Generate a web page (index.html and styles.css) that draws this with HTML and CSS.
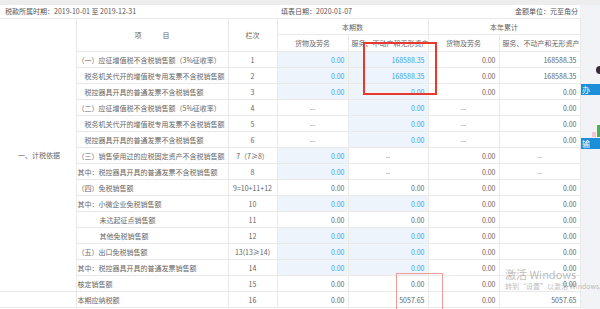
FILE: index.html
```html
<!DOCTYPE html>
<html lang="zh">
<head>
<meta charset="utf-8">
<link rel="stylesheet" href="styles.css">
</head>
<body>
<div class="topstrip"></div>
<div class="page">
  <div class="main">
    <div class="meta">
      <span>税款所属时期：2019-10-01 至 2019-12-31</span>
      <span class="meta-date">填表日期：2020-01-07</span>
      <span class="meta-unit">金额单位：元至角分</span>
    </div>
    <table class="grid">
      <colgroup>
        <col class="c0"><col class="c1"><col class="c2"><col class="c3"><col class="c4"><col class="c5"><col class="c6">
      </colgroup>
      <tr class="h1">
        <td class="sec" rowspan="17">一、计税依据</td>
        <td class="ctr" rowspan="2">项　　　目</td>
        <td class="ctr" rowspan="2">栏次</td>
        <td class="ctr" colspan="2">本期数</td>
        <td class="ctr" colspan="2">本年累计</td>
      </tr>
      <tr class="h2">
        <td class="ctr">货物及劳务</td>
        <td class="ctr">服务、不动产和无形资产</td>
        <td class="ctr">货物及劳务</td>
        <td class="ctr">服务、不动产和无形资产</td>
      </tr>
      <tr><td class="lbl">（一）应征增值税不含税销售额（3%征收率）</td><td class="ctr">1</td><td class="num ed">0.00</td><td class="num ed">168588.35</td><td class="num">0.00</td><td class="num">168588.35</td></tr>
      <tr><td class="lbl ind">税务机关代开的增值税专用发票不含税销售额</td><td class="ctr">2</td><td class="num ed">0.00</td><td class="num ed">168588.35</td><td class="num">0.00</td><td class="num">168588.35</td></tr>
      <tr><td class="lbl ind">税控器具开具的普通发票不含税销售额</td><td class="ctr">3</td><td class="num ed">0.00</td><td class="num ed">0.00</td><td class="num">0.00</td><td class="num">0.00</td></tr>
      <tr><td class="lbl">（二）应征增值税不含税销售额（5%征收率）</td><td class="ctr">4</td><td class="ctr dash">--</td><td class="num ed">0.00</td><td class="ctr dash">--</td><td class="num">0.00</td></tr>
      <tr><td class="lbl ind">税务机关代开的增值税专用发票不含税销售额</td><td class="ctr">5</td><td class="ctr dash">--</td><td class="num ed">0.00</td><td class="ctr dash">--</td><td class="num">0.00</td></tr>
      <tr><td class="lbl ind">税控器具开具的普通发票不含税销售额</td><td class="ctr">6</td><td class="ctr dash">--</td><td class="num ed">0.00</td><td class="ctr dash">--</td><td class="num">0.00</td></tr>
      <tr><td class="lbl">（三）销售使用过的应税固定资产不含税销售额</td><td class="ctr">7（7≥8）</td><td class="num ed">0.00</td><td class="ctr dash">--</td><td class="num">0.00</td><td class="ctr dash">--</td></tr>
      <tr><td class="lbl">其中：税控器具开具的普通发票不含税销售额</td><td class="ctr">8</td><td class="num ed">0.00</td><td class="ctr dash">--</td><td class="num">0.00</td><td class="ctr dash">--</td></tr>
      <tr><td class="lbl">（四）免税销售额</td><td class="ctr">9=10+11+12</td><td class="num">0.00</td><td class="num">0.00</td><td class="num">0.00</td><td class="num">0.00</td></tr>
      <tr><td class="lbl">其中：小微企业免税销售额</td><td class="ctr">10</td><td class="num ed">0.00</td><td class="num ed">0.00</td><td class="num">0.00</td><td class="num">0.00</td></tr>
      <tr><td class="lbl ind2">未达起征点销售额</td><td class="ctr">11</td><td class="num">0.00</td><td class="num">0.00</td><td class="num">0.00</td><td class="num">0.00</td></tr>
      <tr><td class="lbl ind2">其他免税销售额</td><td class="ctr">12</td><td class="num ed">0.00</td><td class="num ed">0.00</td><td class="num">0.00</td><td class="num">0.00</td></tr>
      <tr><td class="lbl">（五）出口免税销售额</td><td class="ctr">13(13≥14)</td><td class="num ed">0.00</td><td class="num ed">0.00</td><td class="num">0.00</td><td class="num">0.00</td></tr>
      <tr><td class="lbl">其中：税控器具开具的普通发票销售额</td><td class="ctr">14</td><td class="num ed">0.00</td><td class="num ed">0.00</td><td class="num">0.00</td><td class="num">0.00</td></tr>
      <tr><td class="lbl">核定销售额</td><td class="ctr">15</td><td class="num">0.00</td><td class="num">0.00</td><td class="num">0.00</td><td class="num">0.00</td></tr>
      <tr><td class="sec"></td><td class="lbl">本期应纳税额</td><td class="ctr">16</td><td class="num">0.00</td><td class="num">5057.65</td><td class="num">0.00</td><td class="num">5057.65</td></tr>
    </table>
    <div class="mark mark-a"></div>
    <div class="mark mark-b"></div>
    <div class="watermark">
      <div class="wm-big">激活 Windows</div>
      <div class="wm-small">转到“设置”以激活 Windows。</div>
    </div>
  </div>
  <div class="side">
    <div class="side-dot"></div>
    <div class="side-btn btn-a">办</div>
    <div class="side-deco">
      <span class="deco-pink"></span><span class="deco-green"></span>
    </div>
    <div class="side-btn btn-b">输</div>
  </div>
</div>
</body>
</html>
```

FILE: styles.css
```css
* { box-sizing: border-box; }
html, body {
  margin: 0;
  padding: 0;
  width: 600px;
  height: 309px;
  overflow: hidden;
  background: #ffffff;
  font-family: "Noto Sans CJK SC", "Noto Sans", sans-serif;
  font-size: 7px;
  color: #666666;
}
.topstrip {
  height: 5px;
  background: #ededed;
}
.page {
  display: flex;
  height: 304px;
}
.main {
  width: 580px;
  position: relative;
  background: #ffffff;
}
.meta {
  height: 13px;
  display: flex;
  align-items: center;
  padding: 0 2px 0 5px;
  color: #555555;
  line-height: 13px;
}
.meta-date { margin-left: 145px; }
.meta-unit { margin-left: auto; }
.grid {
  border-collapse: collapse;
  table-layout: fixed;
  width: 580px;
}
.c0 { width: 76px; }
.c1 { width: 152px; }
.c2 { width: 49px; }
.c3 { width: 71px; }
.c4 { width: 80px; }
.c5 { width: 71px; }
.c6 { width: 81px; }
.grid td {
  border: 1px solid #e9e9e9;
  height: 16px;
  padding: 0 3px;
  line-height: 14px;
  white-space: nowrap;
  overflow: hidden;
}
.grid tr.h1 td { height: 16px; }
.grid tr.h2 td { height: 17px; }
.grid td.sec {
  border-left: none;
  text-align: left;
  padding-left: 18px;
  color: #666;
}
.ctr { text-align: center; }
.lbl { text-align: left; padding-left: 1px !important; }
.lbl.ind { padding-left: 8px !important; }
.lbl.ind2 { padding-left: 23px !important; }
.num { text-align: right; padding-right: 3px !important; }
.ed { background: #eef4fc; color: #3ca2ec; }
.dash { color: #888; }
.mark {
  position: absolute;
  pointer-events: none;
}
.mark-a {
  left: 363px;
  top: 37px;
  width: 74px;
  height: 53px;
  border: 2px solid #e8392e;
}
.mark-b {
  left: 396px;
  top: 268px;
  width: 47px;
  height: 38px;
  border: 1px solid #f29a9a;
}
.watermark {
  position: absolute;
  left: 505px;
  top: 263px;
  color: rgba(130, 130, 130, 0.55);
  white-space: nowrap;
}
.wm-big { font-size: 11px; line-height: 13px; }
.wm-small { font-size: 7px; line-height: 9px; margin-top: 1px; }
.side {
  width: 20px;
  background: #f2f3f7;
  display: flex;
  flex-direction: column;
  align-items: flex-end;
  overflow: hidden;
}
.side-dot {
  width: 8px;
  height: 8px;
  border-radius: 50%;
  background: #3a2a3a;
  margin-top: 61px;
  margin-right: -4px;
}
.side-btn {
  width: 20px;
  height: 11px;
  background: #1d8fd9;
  color: #fff;
  font-size: 8px;
  line-height: 11px;
  padding-left: 2px;
}
.btn-a { margin-top: 10px; }
.side-deco {
  display: flex;
  align-items: flex-end;
  height: 12px;
  margin-top: 30px;
  gap: 1px;
}
.deco-pink { width: 4px; height: 5px; background: #f4c6d6; }
.deco-green { width: 3px; height: 12px; background: #4cb050; }
.btn-b { margin-top: 1px; }
```
